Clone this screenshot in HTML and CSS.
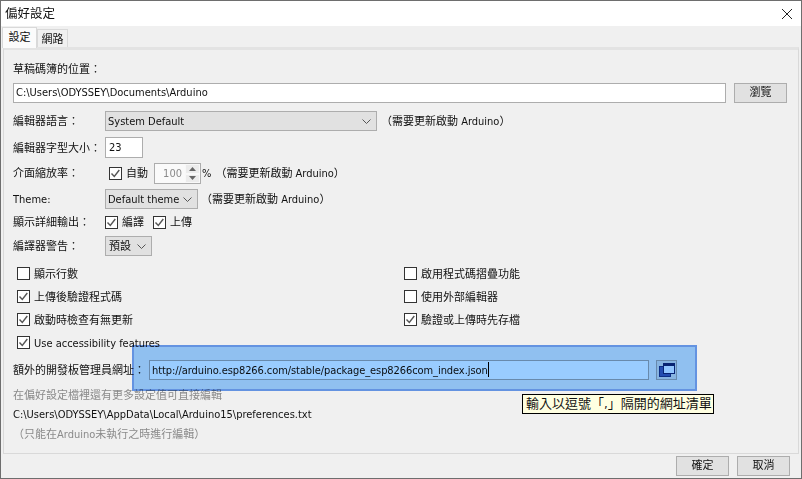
FILE: index.html
```html
<!DOCTYPE html>
<html lang="zh-Hant">
<head>
<meta charset="utf-8">
<title>偏好設定</title>
<link rel="stylesheet" href="styles.css">
</head>
<body>
<div class="window">
  <header class="titlebar">
    <span class="title">偏好設定</span>
    <svg class="close" width="12" height="12" viewBox="0 0 12 12"><path d="M1 1l10 10M11 1L1 11" stroke="#222" stroke-width="1" fill="none"/></svg>
  </header>
  <div class="body">
    <div class="tabs">
      <div class="tab active">設定</div>
      <div class="tab">網路</div>
    </div>
    <main class="panel">
      <div class="sketch-label">草稿碼簿的位置：</div>
      <div class="row sketch-row">
        <div class="input grow">C:\Users\ODYSSEY\Documents\Arduino</div>
        <div class="btn browse">瀏覽</div>
      </div>
      <div class="row lang-row">
        <span class="lbl">編輯器語言：</span>
        <div class="select lang">System Default<svg class="chev" width="9" height="5" viewBox="0 0 9 5"><path d="M.5.5l4 4 4-4" stroke="#555" fill="none"/></svg></div>
        <span class="note lang-note">（需要更新啟動 Arduino）</span>
      </div>
      <div class="row size-row">
        <span class="lbl">編輯器字型大小：</span>
        <div class="input size">23</div>
      </div>
      <div class="row scale-row">
        <span class="lbl">介面縮放率：</span>
        <label class="check auto"><svg class="box" viewBox="0 0 13 13"><rect x=".5" y=".5" width="12" height="12" fill="#fff" stroke="#333"/><path d="M2.5 6.5l2.8 3 5-6.5" fill="none" stroke="#555" stroke-width="1.4"/></svg>自動</label>
        <div class="spinner"><span class="spin-val">100</span><span class="spin-btns"><span class="spin-btn"><svg width="7" height="4" viewBox="0 0 7 4"><path d="M3.5 0L7 4H0z" fill="#666"/></svg></span><span class="spin-btn"><svg width="7" height="4" viewBox="0 0 7 4"><path d="M3.5 4L7 0H0z" fill="#666"/></svg></span></span></div>
        <span class="pct">%</span>
        <span class="note scale-note">（需要更新啟動 Arduino）</span>
      </div>
      <div class="row theme-row">
        <span class="lbl">Theme:</span>
        <div class="select theme">Default theme<svg class="chev" width="9" height="5" viewBox="0 0 9 5"><path d="M.5.5l4 4 4-4" stroke="#555" fill="none"/></svg></div>
        <span class="note theme-note">（需要更新啟動 Arduino）</span>
      </div>
      <div class="row verbose-row">
        <span class="lbl">顯示詳細輸出：</span>
        <label class="check"><svg class="box" viewBox="0 0 13 13"><rect x=".5" y=".5" width="12" height="12" fill="#fff" stroke="#333"/><path d="M2.5 6.5l2.8 3 5-6.5" fill="none" stroke="#555" stroke-width="1.4"/></svg>編譯</label>
        <label class="check upload"><svg class="box" viewBox="0 0 13 13"><rect x=".5" y=".5" width="12" height="12" fill="#fff" stroke="#333"/><path d="M2.5 6.5l2.8 3 5-6.5" fill="none" stroke="#555" stroke-width="1.4"/></svg>上傳</label>
      </div>
      <div class="row warn-row">
        <span class="lbl">編譯器警告：</span>
        <div class="select warn">預設<svg class="chev" width="9" height="5" viewBox="0 0 9 5"><path d="M.5.5l4 4 4-4" stroke="#555" fill="none"/></svg></div>
      </div>
      <div class="options">
        <label class="check"><svg class="box" viewBox="0 0 13 13"><rect x=".5" y=".5" width="12" height="12" fill="#fff" stroke="#333"/></svg>顯示行數</label>
        <label class="check"><svg class="box" viewBox="0 0 13 13"><rect x=".5" y=".5" width="12" height="12" fill="#fff" stroke="#333"/></svg>啟用程式碼摺疊功能</label>
        <label class="check"><svg class="box" viewBox="0 0 13 13"><rect x=".5" y=".5" width="12" height="12" fill="#fff" stroke="#333"/><path d="M2.5 6.5l2.8 3 5-6.5" fill="none" stroke="#555" stroke-width="1.4"/></svg>上傳後驗證程式碼</label>
        <label class="check"><svg class="box" viewBox="0 0 13 13"><rect x=".5" y=".5" width="12" height="12" fill="#fff" stroke="#333"/></svg>使用外部編輯器</label>
        <label class="check"><svg class="box" viewBox="0 0 13 13"><rect x=".5" y=".5" width="12" height="12" fill="#fff" stroke="#333"/><path d="M2.5 6.5l2.8 3 5-6.5" fill="none" stroke="#555" stroke-width="1.4"/></svg>啟動時檢查有無更新</label>
        <label class="check"><svg class="box" viewBox="0 0 13 13"><rect x=".5" y=".5" width="12" height="12" fill="#fff" stroke="#333"/><path d="M2.5 6.5l2.8 3 5-6.5" fill="none" stroke="#555" stroke-width="1.4"/></svg>驗證或上傳時先存檔</label>
        <label class="check"><svg class="box" viewBox="0 0 13 13"><rect x=".5" y=".5" width="12" height="12" fill="#fff" stroke="#333"/><path d="M2.5 6.5l2.8 3 5-6.5" fill="none" stroke="#555" stroke-width="1.4"/></svg>Use accessibility features</label>
      </div>
      <div class="row url-row">
        <span class="lbl url-lbl">額外的開發板管理員網址：</span>
        <div class="input url">http://arduino.esp8266.com/stable/package_esp8266com_index.json<span class="caret"></span></div>
        <div class="btn url-btn"><svg width="16" height="14" viewBox="0 0 16 14"><rect x=".5" y="3.5" width="11" height="10" fill="#3a5fb0" stroke="#173a86"/><rect x="4.5" y=".5" width="11" height="10" fill="#f4f8ff" stroke="#0d2c73"/><path d="M5 2h10" stroke="#0d2c73" stroke-width="2"/></svg></div>
      </div>
      <div class="gray more">在偏好設定檔裡還有更多設定值可直接編輯</div>
      <div class="path">C:\Users\ODYSSEY\AppData\Local\Arduino15\preferences.txt</div>
      <div class="gray edit">（只能在Arduino未執行之時進行編輯）</div>
      <div class="highlight"></div>
      <div class="tooltip">輸入以逗號「,」隔開的網址清單</div>
    </main>
    <footer class="footer">
      <div class="btn">確定</div>
      <div class="btn">取消</div>
    </footer>
  </div>
</div>
</body>
</html>
```
FILE: styles.css
```css
* { box-sizing: border-box; }
html, body { margin: 0; padding: 0; }
body {
  width: 802px; height: 479px; overflow: hidden;
  font: 11px/16px "DejaVu Sans", "Noto Sans CJK TC", sans-serif;
  font-stretch: condensed;
  color: #111;
}
.window {
  width: 802px; height: 479px;
  border: 1px solid #6e6e6e;
  display: flex; flex-direction: column; background: #f0f0f0;
}
.titlebar {
  height: 25px; background: #fff; flex: none;
  display: flex; align-items: center; justify-content: space-between;
  padding: 0 8px 0 4px;
}
.title { font-size: 12.5px; }
.body { flex: 1; display: flex; flex-direction: column; min-height: 0; }
.tabs { display: flex; height: 21px; flex: none; padding-left: 1px; }
.tab {
  width: 31px; height: 18px; margin-top: 3px; text-align: center; line-height: 19px;
  background: #f0f0f0; border: 1px solid #d9d9d9; border-bottom: 0;
}
.tab.active { width: 35px; height: 21px; margin-top: 1px; line-height: 20px; background: #fbfbfb; position: relative; z-index: 1; }
.panel {
  position: relative; flex: none; height: 407px; margin: 0 2px;
  border: 1px solid #d9d9d9; border-top: 3px solid #e3e3e3;
  padding: 12px 8px 0 9px; background: #f0f0f0;
}
.row { display: flex; align-items: center; }
.sketch-label { height: 15px; }
.sketch-row { margin-top: 6px; height: 20px; }
.grow { flex: 1; }
.input {
  height: 20px; background: #fff; border: 1px solid #adadad; padding: 1px 2px 0; line-height: 16px; white-space: nowrap;
}
.btn {
  width: 53px; height: 20px; background: #e1e1e1; border: 1px solid #adadad; padding-top: 1px;
  text-align: center; line-height: 16px;
}
.browse { margin-left: 8px; margin-right: 3px; }
.lbl { width: 92px; flex: none; white-space: nowrap; padding-top: 2px; }
.lang-row { margin-top: 8px; height: 20px; }
.select {
  height: 20px; background: #e1e1e1; border: 1px solid #adadad; padding: 1px 5px 0 2px;
  display: flex; align-items: center; justify-content: space-between; line-height: 16px; white-space: nowrap;
}
.lang { width: 272px; }
.note { white-space: nowrap; padding-top: 2px; }
.lang-note { margin-left: 4px; }
.size-row { margin-top: 6px; height: 21px; }
.size { width: 38px; height: 21px; line-height: 17px; padding-left: 3px; }
.scale-row { margin-top: 5px; height: 21px; }
.scale-row .lbl, .scale-row .note, .scale-row .check { padding-top: 0; }
.scale-row .box { margin-top: 0; }
.check { display: flex; align-items: center; white-space: nowrap; padding-top: 2px; }
.box { width: 13px; height: 13px; margin: -2px 4px 0 0; flex: none; }
.auto { margin-left: 4px; width: 45px; }
.spinner { width: 47px; height: 21px; border: 1px solid #adadad; background: #fafafa; display: flex; }
.spin-val { color: #8a8a8a; flex: 1; text-align: right; padding-right: 3px; line-height: 19px; }
.spin-btns { width: 15px; display: flex; flex-direction: column; background: #f0f0f0; }
.spin-btn { flex: 1; display: flex; align-items: center; justify-content: center; border: 1px solid #f8f8f8; background: #ececec; }
.pct { margin-left: 1px; }
.scale-note { margin-left: 4px; }
.theme-row { margin-top: 5px; height: 20px; }
.theme { width: 93px; }
.theme-note { margin-left: 3px; }
.verbose-row { margin-top: 3px; height: 20px; }
.verbose-row .box { margin-top: -1px; }
.upload { margin-left: 9px; }
.warn-row { margin-top: 4px; height: 20px; }
.warn { width: 47px; padding-left: 3px; }
.options {
  margin-top: 6px; padding-left: 4px;
  display: grid; grid-template-columns: 387px 1fr; grid-auto-rows: 23px; align-items: center;
}
.url-row { margin-top: 6px; height: 20px; }
.url-lbl { width: 136px; }
.url { width: 500px; letter-spacing: -0.08px; }
.caret { display: inline-block; width: 1px; height: 15px; background: #000; vertical-align: -3px; }
.url-btn { width: 21px; margin-left: 7px; padding-top: 0; display: flex; align-items: center; justify-content: center; }
.gray { color: #8a8a8a; }
.more { margin-top: 8px; }
.path { margin-top: 3px; }
.edit { margin-top: 4px; }
.highlight {
  position: absolute; left: 128px; top: 295px; width: 565px; height: 46px;
  background: #99ccff; border: 2px solid #6a9cf0; mix-blend-mode: multiply;
}
.tooltip {
  position: absolute; left: 518px; top: 344px; height: 20px; width: 192px; padding: 0 3px;
  background: #ffffe1; border: 1px solid #000; font-size: 13px; line-height: 18px; white-space: nowrap;
}
.footer { flex: 1; display: flex; justify-content: flex-end; gap: 8px; padding: 2px 11px 0 0; }
```
